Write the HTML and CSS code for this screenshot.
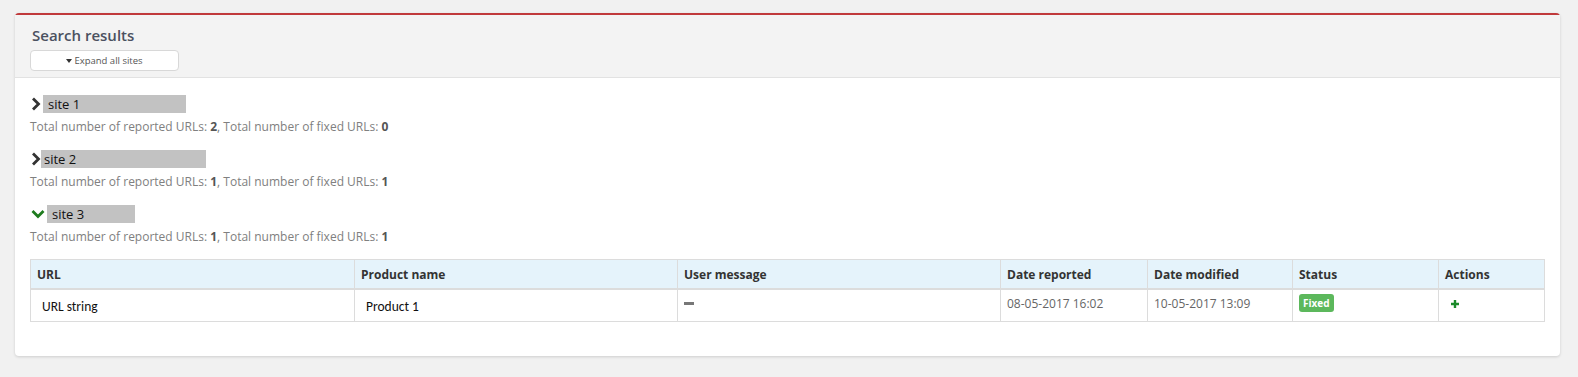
FILE: index.html
```
<!DOCTYPE html>
<html lang="en">
<head>
    <meta charset="UTF-8">
    <title>Search results</title>
    <link rel="stylesheet" href="styles.css">
</head>
<body>
    <div class="panel">
        <div class="panel-heading">
            <h2>Search results</h2>
            <button class="expand-btn"><span class="caret"></span>Expand all sites</button>
        </div>
        <div class="panel-body">
            <div class="site">
                <div class="site-title">
                    <svg class="chev" width="10" height="14" viewBox="0 0 10 14"><path d="M2 1.5 L7.5 7 L2 12.5" fill="none" stroke="#333" stroke-width="2.8"/></svg>
                    <span class="site-name" style="width: 143px">site 1</span>
                </div>
                <p class="summary">Total number of reported URLs: <b>2</b>, Total number of fixed URLs: <b>0</b></p>
            </div>
            <div class="site">
                <div class="site-title">
                    <svg class="chev" width="10" height="14" viewBox="0 0 10 14"><path d="M2 1.5 L7.5 7 L2 12.5" fill="none" stroke="#333" stroke-width="2.8"/></svg>
                    <span class="site-name tight" style="width: 165px">site 2</span>
                </div>
                <p class="summary">Total number of reported URLs: <b>1</b>, Total number of fixed URLs: <b>1</b></p>
            </div>
            <div class="site">
                <div class="site-title">
                    <svg class="chev" width="14" height="12" viewBox="0 0 14 12"><path d="M1.5 3 L7 8.5 L12.5 3" fill="none" stroke="#1e7b1e" stroke-width="2.8"/></svg>
                    <span class="site-name" style="width: 88px">site 3</span>
                </div>
                <p class="summary">Total number of reported URLs: <b>1</b>, Total number of fixed URLs: <b>1</b></p>
            </div>

            <table class="results">
                <colgroup>
                    <col style="width: 324px">
                    <col style="width: 323px">
                    <col style="width: 323px">
                    <col style="width: 147px">
                    <col style="width: 145px">
                    <col style="width: 146px">
                    <col style="width: 106px">
                </colgroup>
                <thead>
                    <tr>
                        <th>URL</th>
                        <th>Product name</th>
                        <th>User message</th>
                        <th>Date reported</th>
                        <th>Date modified</th>
                        <th>Status</th>
                        <th>Actions</th>
                    </tr>
                </thead>
                <tbody>
                    <tr>
                        <td class="plain">URL string</td>
                        <td class="plain">Product 1</td>
                        <td><span class="dash"></span></td>
                        <td>08-05-2017 16:02</td>
                        <td>10-05-2017 13:09</td>
                        <td><span class="badge">Fixed</span></td>
                        <td><svg class="plus" width="8" height="8" viewBox="0 0 8 8"><path d="M4 0 V8 M0 4 H8" stroke="#1b8a2a" stroke-width="2.4"/></svg></td>
                    </tr>
                </tbody>
            </table>
        </div>
    </div>
</body>
</html>
```

FILE: styles.css
```
body {
    margin: 0;
    padding: 13px 18px 20px 15px;
    background: #f1f1f1;
    font-family: "Open Sans", sans-serif;
    color: #333;
}
.panel {
    background: white;
    border-top: 2px solid #c0393b;
    border-radius: 4px;
    box-shadow: 0 1px 3px rgba(0,0,0,0.15);
    width: 1545px;
}
.panel-heading {
    background: #f3f3f3;
    border-bottom: 1px solid #e2e2e2;
    padding: 9px 15px 6px;
}
.panel-heading h2 {
    margin: 0 0 4px 2px;
    font-size: 15px;
    font-weight: 600;
    color: #4b5160;
    line-height: 22px;
}
.expand-btn {
    display: block;
    width: 149px;
    height: 21px;
    background: white;
    border: 1px solid #d8d8d8;
    border-radius: 4px;
    font-family: "Open Sans", sans-serif;
    font-size: 9.5px;
    color: #555;
    padding: 0;
}
.caret {
    display: inline-block;
    border-top: 4px solid #333;
    border-left: 3px solid transparent;
    border-right: 3px solid transparent;
    margin-right: 2px;
    vertical-align: 1px;
}
.panel-body {
    padding: 17px 16px 34px 15px;
}
.site {
    margin-bottom: 15px;
}
.site-title {
    display: flex;
    align-items: center;
    height: 18px;
}
.chev {
    margin-left: 1px;
}
.site-name {
    display: inline-block;
    background: #c2c2c2;
    height: 18px;
    line-height: 18px;
    font-size: 13px;
    color: #111;
    padding-left: 5px;
    box-sizing: border-box;
    margin-left: 2px;
}
.site-name.tight {
    margin-left: 0;
    padding-left: 3px;
}
.summary {
    margin: 6px 0 0;
    font-size: 12px;
    color: #808080;
    line-height: 16px;
}
.summary b {
    color: #555;
    font-weight: 700;
}
.site:last-of-type {
    margin-bottom: 14px;
}
.results {
    width: 1514px;
    table-layout: fixed;
    border-collapse: collapse;
    font-size: 12px;
}
.results th {
    background: #e5f3fb;
    text-align: left;
    font-weight: 700;
    color: #333;
    height: 28px;
    padding: 0 6px;
    border: 1px solid #dcdcdc;
    border-bottom: 2px solid #dcdcdc;
}
.results td {
    border: 1px solid #dcdcdc;
    height: 32px;
    box-sizing: border-box;
    padding: 0 6px 4px;
    vertical-align: middle;
    color: #666;
}
.results td.plain {
    font-family: "Carlito", "Liberation Sans", sans-serif;
    font-size: 13.5px;
    color: #111;
    padding: 3px 11px 0;
}
.dash {
    display: inline-block;
    width: 10px;
    height: 3px;
    background: #777;
    vertical-align: 3px;
}
.badge {
    display: inline-block;
    background: #5cb85c;
    color: white;
    font-size: 10px;
    font-weight: 700;
    padding: 0 4px;
    border-radius: 3px;
    line-height: 18px;
}
.plus {
    margin-left: 6px;
}
```
